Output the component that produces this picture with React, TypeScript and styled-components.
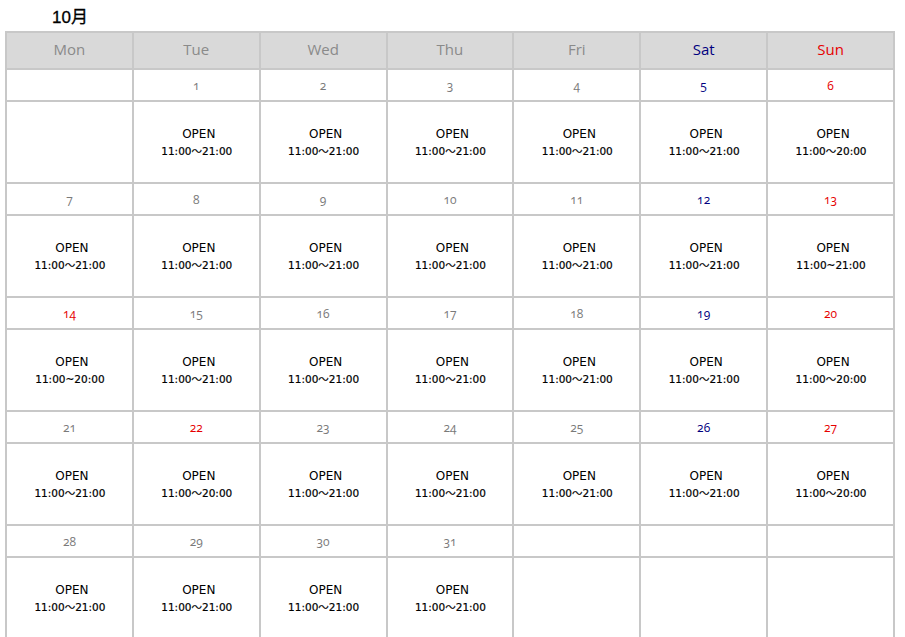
import React from "react";
import styled, { createGlobalStyle } from "styled-components";

const Global = createGlobalStyle`
  html, body { margin: 0; padding: 0; background: #fff; }
  body { font-family: "DejaVu Sans", "Noto Sans CJK JP", sans-serif; }
`;

const Page = styled.div`
  padding: 8px 0 0 5px;
  width: 890px;
`;

const Title = styled.h2`
  margin: 0 0 3px 47px;
  height: 20px;
  font-family: "Liberation Sans", "Noto Sans CJK JP", sans-serif;
  font-size: 17px;
  font-weight: normal;
  -webkit-text-stroke: 0.3px #000;
  line-height: 20px;
  color: #000;
`;

const Table = styled.table`
  border-collapse: collapse;
  table-layout: fixed;
  width: 890px;
  border: 2px solid #c8c8c8;
`;

type Tone = "plain" | "sat" | "sun";

const toneColor = (t: Tone, base: string) =>
  t === "sat" ? "#000080" : t === "sun" ? "#e60000" : base;

const HeadCell = styled.th<{ $tone: Tone }>`
  height: 32px;
  padding: 0 0 3px;
  background: #d9d9d9;
  border: 2px solid #c8c8c8;
  font-family: "Open Sans", sans-serif;
  font-weight: normal;
  font-size: 15px;
  color: ${(p) => toneColor(p.$tone, "#8a8a8a")};
  text-align: center;
  vertical-align: middle;
`;

const DateCell = styled.td<{ $tone: Tone }>`
  height: 30px;
  padding: 0;
  border: 2px solid #c8c8c8;
  font-family: "Open Sans", sans-serif;
  font-variant-numeric: oldstyle-nums;
  font-size: 12px;
  color: ${(p) => toneColor(p.$tone, "#7a7a7a")};
  text-align: center;
  vertical-align: middle;
`;

const InfoCell = styled.td`
  height: 80px;
  padding: 0;
  border: 2px solid #c8c8c8;
  text-align: center;
  vertical-align: middle;
`;

const Status = styled.div`
  padding-left: 5px;
  font-family: "DejaVu Sans", sans-serif;
  font-size: 12px;
  line-height: 16px;
  color: #000;
`;

const Hours = styled.div`
  margin-top: 3px;
  padding-left: 1px;
  font-family: "DejaVu Sans", "Noto Sans CJK JP", sans-serif;
  font-size: 10.5px;
  font-weight: normal;
  -webkit-text-stroke: 0.2px #000;
  line-height: 13px;
  color: #000;
`;

type Day = { d: number; tone: Tone; hours: string } | null;

const heads: { label: string; tone: Tone }[] = [
  { label: "Mon", tone: "plain" },
  { label: "Tue", tone: "plain" },
  { label: "Wed", tone: "plain" },
  { label: "Thu", tone: "plain" },
  { label: "Fri", tone: "plain" },
  { label: "Sat", tone: "sat" },
  { label: "Sun", tone: "sun" },
];

const W = "11:00〜21:00";
const WS = "11:00〜20:00";

const special: Record<number, string> = {
  6: WS,
  13: "11:00~21:00",
  14: "11:00~20:00",
  20: WS,
  22: WS,
  27: WS,
};

const holidays = new Set([14, 22]);

const weeks: Day[][] = (() => {
  const cells: Day[] = [null];
  for (let d = 1; d <= 31; d++) {
    const col = cells.length % 7;
    let tone: Tone = col === 5 ? "sat" : col === 6 ? "sun" : "plain";
    if (holidays.has(d)) tone = "sun";
    cells.push({ d, tone, hours: special[d] ?? W });
  }
  while (cells.length % 7) cells.push(null);
  const out: Day[][] = [];
  for (let i = 0; i < cells.length; i += 7) out.push(cells.slice(i, i + 7));
  return out;
})();

export default function App() {
  return (
    <>
      <Global />
      <Page>
        <Title>10月</Title>
        <Table>
          <thead>
            <tr>
              {heads.map((h) => (
                <HeadCell key={h.label} $tone={h.tone}>
                  {h.label}
                </HeadCell>
              ))}
            </tr>
          </thead>
          <tbody>
            {weeks.map((week, wi) => (
              <React.Fragment key={wi}>
                <tr>
                  {week.map((day, i) => (
                    <DateCell key={i} $tone={day ? day.tone : "plain"}>
                      {day ? day.d : ""}
                    </DateCell>
                  ))}
                </tr>
                <tr>
                  {week.map((day, i) => (
                    <InfoCell key={i}>
                      {day && (
                        <>
                          <Status>OPEN</Status>
                          <Hours>{day.hours}</Hours>
                        </>
                      )}
                    </InfoCell>
                  ))}
                </tr>
              </React.Fragment>
            ))}
          </tbody>
        </Table>
      </Page>
    </>
  );
}
